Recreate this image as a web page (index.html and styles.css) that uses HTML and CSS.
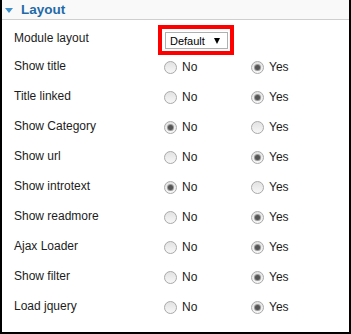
FILE: index.html
```html
<!DOCTYPE html>
<html lang="en">
<head>
    <meta charset="UTF-8">
    <meta name="viewport" content="width=device-width, initial-scale=1.0">
    <title>Layout</title>
    <link rel="stylesheet" href="styles.css">
</head>
<body>
    <div class="panel">
        <div class="panel-head">
            <span class="arrow"></span>
            <span class="panel-title">Layout</span>
        </div>

        <div class="fields">
            <div class="field field-module">
                <label class="field-label">Module layout</label>
                <div class="highlight">
                    <div class="select">
                        <span>Default</span>
                        <span class="caret"></span>
                    </div>
                </div>
            </div>

            <div class="field">
                <label class="field-label">Show title</label>
                <div class="option"><span class="radio"></span>No</div>
                <div class="option"><span class="radio checked"></span>Yes</div>
            </div>
            <div class="field">
                <label class="field-label">Title linked</label>
                <div class="option"><span class="radio"></span>No</div>
                <div class="option"><span class="radio checked"></span>Yes</div>
            </div>
            <div class="field">
                <label class="field-label">Show Category</label>
                <div class="option"><span class="radio checked"></span>No</div>
                <div class="option"><span class="radio"></span>Yes</div>
            </div>
            <div class="field">
                <label class="field-label">Show url</label>
                <div class="option"><span class="radio"></span>No</div>
                <div class="option"><span class="radio checked"></span>Yes</div>
            </div>
            <div class="field">
                <label class="field-label">Show introtext</label>
                <div class="option"><span class="radio checked"></span>No</div>
                <div class="option"><span class="radio"></span>Yes</div>
            </div>
            <div class="field">
                <label class="field-label">Show readmore</label>
                <div class="option"><span class="radio"></span>No</div>
                <div class="option"><span class="radio checked"></span>Yes</div>
            </div>
            <div class="field">
                <label class="field-label">Ajax Loader</label>
                <div class="option"><span class="radio"></span>No</div>
                <div class="option"><span class="radio checked"></span>Yes</div>
            </div>
            <div class="field">
                <label class="field-label">Show filter</label>
                <div class="option"><span class="radio"></span>No</div>
                <div class="option"><span class="radio checked"></span>Yes</div>
            </div>
            <div class="field">
                <label class="field-label">Load jquery</label>
                <div class="option"><span class="radio"></span>No</div>
                <div class="option"><span class="radio checked"></span>Yes</div>
            </div>
        </div>
    </div>
</body>
</html>
```

FILE: styles.css
```css
body {
    margin: 0;
    font-family: "Liberation Sans", Arial, sans-serif;
    background: #fff;
}
.panel {
    box-sizing: border-box;
    height: 334px;
    border: 2px solid #000;
    border-top: 0;
    background: #fff;
}
.panel-head {
    height: 19px;
    border-bottom: 1px solid #cfcfcf;
    background: #f9f9f9;
    display: flex;
    align-items: center;
    padding-left: 3px;
}
.arrow {
    width: 0;
    height: 0;
    border-left: 4px solid transparent;
    border-right: 4px solid transparent;
    border-top: 5px solid #3d8fc9;
    margin-right: 8px;
    margin-top: 2px;
}
.panel-title {
    font-size: 13.5px;
    font-weight: bold;
    color: #1f6aa8;
}
.fields {
    padding-top: 5px;
}
.field {
    display: flex;
    align-items: center;
    height: 30px;
    font-size: 12px;
    color: #1c1c1c;
}
.field-module {
    height: 26px;
}
.field-label {
    width: 150px;
    padding-left: 12px;
}
.highlight {
    margin-top: 4px;
    margin-left: -6px;
    border: 4px solid #f00;
    padding: 3px 2px 2px 3px;
}
.select {
    box-sizing: border-box;
    width: 63px;
    height: 17px;
    border: 1px solid #b0b0b0;
    background: #fff;
    display: flex;
    align-items: center;
    justify-content: space-between;
    padding: 0 7px 0 4px;
    font-size: 11px;
    color: #000;
}
.caret {
    width: 0;
    height: 0;
    border-left: 3px solid transparent;
    border-right: 3px solid transparent;
    border-top: 6px solid #000;
}
.option {
    display: flex;
    align-items: center;
    width: 87px;
    padding-top: 2px;
}
.radio {
    box-sizing: border-box;
    width: 13px;
    height: 13px;
    border-radius: 50%;
    border: 1px solid #a9a9a9;
    background: linear-gradient(#e2e2e2, #f7f7f7);
    margin-right: 5px;
    display: flex;
    align-items: center;
    justify-content: center;
}
.radio.checked::after {
    content: "";
    width: 5px;
    height: 5px;
    border-radius: 50%;
    background: #555;
    box-shadow: 0 0 0 1px #999;
}
```
